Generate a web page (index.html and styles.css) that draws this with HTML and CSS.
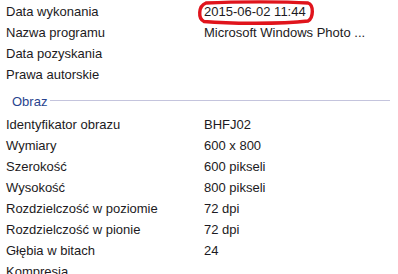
FILE: index.html
```html
<!DOCTYPE html>
<html>
<head>
<meta charset="utf-8">
<link rel="stylesheet" href="styles.css">
</head>
<body>
<div class="props">
  <div class="row"><span class="label">Data wykonania</span><span class="value date">2015-06-02 11:44<svg class="ring" width="120" height="26" viewBox="0 0 120 26"><path d="M10 3 C40 1.5 90 1.5 112 3 C118 5 117.5 18 112 21 C85 24 35 24 8 21.5 C2 19 2 6 10 3 Z" fill="none" stroke="#e0141c" stroke-width="3.4"/></svg></span></div>
  <div class="row"><span class="label">Nazwa programu</span><span class="value">Microsoft Windows Photo ...</span></div>
  <div class="row"><span class="label">Data pozyskania</span><span class="value"></span></div>
  <div class="row"><span class="label">Prawa autorskie</span><span class="value"></span></div>
  <div class="section"><span class="section-title">Obraz</span><span class="section-line"></span></div>
  <div class="row"><span class="label">Identyfikator obrazu</span><span class="value">BHFJ02</span></div>
  <div class="row"><span class="label">Wymiary</span><span class="value">600 x 800</span></div>
  <div class="row"><span class="label">Szerokość</span><span class="value">600 pikseli</span></div>
  <div class="row"><span class="label">Wysokość</span><span class="value">800 pikseli</span></div>
  <div class="row"><span class="label">Rozdzielczość w poziomie</span><span class="value">72 dpi</span></div>
  <div class="row"><span class="label">Rozdzielczość w pionie</span><span class="value">72 dpi</span></div>
  <div class="row"><span class="label">Głębia w bitach</span><span class="value">24</span></div>
  <div class="row"><span class="label">Kompresja</span><span class="value"></span></div>
</div>
</body>
</html>
```
FILE: styles.css
```css
html, body {
  margin: 0;
  padding: 0;
  background: #ffffff;
  overflow: hidden;
}
.props {
  padding: 1px 0 0 6px;
  font-family: "Liberation Sans", Arial, sans-serif;
  font-size: 13px;
  color: #1c1a22;
}
.row {
  display: grid;
  grid-template-columns: 198px 1fr;
  height: 21px;
  line-height: 21px;
  white-space: nowrap;
}
.value {
  position: relative;
}
.ring {
  position: absolute;
  left: -8px;
  top: -1px;
}
.section {
  display: flex;
  align-items: center;
  height: 21px;
  line-height: 21px;
  padding: 6px 0 2px 6px;
}
.section-title {
  color: #2a448f;
  margin-right: 3px;
}
.section-line {
  width: 340px;
  height: 1px;
  background: #c4c4dd;
  margin-top: -2px;
}
```
